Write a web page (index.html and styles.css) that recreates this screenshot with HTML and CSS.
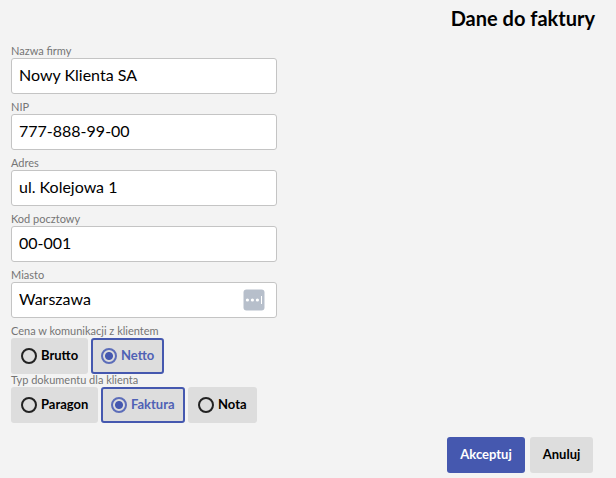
FILE: index.html
```html
<!DOCTYPE html>
<html lang="pl">
<head>
  <meta charset="UTF-8" />
  <meta name="viewport" content="width=device-width, initial-scale=1.0"/>
  <title>Dane do faktury</title>
  <link rel="stylesheet" href="styles.css">
</head>
<body>

  <form class="invoice">
    <h1>Dane do faktury</h1>

    <div class="field">
      <label for="company">Nazwa firmy</label>
      <input type="text" id="company" value="Nowy Klienta SA">
    </div>
    <div class="field">
      <label for="nip">NIP</label>
      <input type="text" id="nip" value="777-888-99-00">
    </div>
    <div class="field">
      <label for="address">Adres</label>
      <input type="text" id="address" value="ul. Kolejowa 1">
    </div>
    <div class="field">
      <label for="postcode">Kod pocztowy</label>
      <input type="text" id="postcode" value="00-001">
    </div>
    <div class="field">
      <label for="city">Miasto</label>
      <input type="text" id="city" value="Warszawa">
      <svg class="autofill" width="22" height="22" viewBox="0 0 22 22">
        <rect x="0.5" y="0.5" width="21" height="21" rx="3" fill="#b7bfcb"/>
        <circle cx="4.4" cy="11" r="1.6" fill="#fff"/>
        <circle cx="9.4" cy="11" r="1.6" fill="#fff"/>
        <circle cx="14.4" cy="11" r="1.6" fill="#fff"/>
        <rect x="18" y="7" width="1" height="8" fill="#fff"/>
      </svg>
    </div>

    <div class="group">
      <span class="group-label">Cena w komunikacji z klientem</span>
      <div class="options">
        <label class="option w-brutto"><input type="radio" name="price"><i class="dot"></i><span>Brutto</span></label>
        <label class="option w-netto"><input type="radio" name="price" checked><i class="dot"></i><span>Netto</span></label>
      </div>
    </div>
    <div class="group">
      <span class="group-label">Typ dokumentu dla klienta</span>
      <div class="options">
        <label class="option w-paragon"><input type="radio" name="doc"><i class="dot"></i><span>Paragon</span></label>
        <label class="option w-faktura"><input type="radio" name="doc" checked><i class="dot"></i><span>Faktura</span></label>
        <label class="option w-nota"><input type="radio" name="doc"><i class="dot"></i><span>Nota</span></label>
      </div>
    </div>

    <div class="actions">
      <button type="button" class="btn btn-primary">Akceptuj</button>
      <button type="button" class="btn btn-cancel">Anuluj</button>
    </div>
  </form>

</body>
</html>
```
FILE: styles.css
```css
* {
  box-sizing: border-box;
}

body {
  margin: 0;
  font-family: Lato, sans-serif;
  background: #f3f3f3;
  color: #000;
  overflow: hidden;
}

.invoice {
  padding: 6px 23px 0 11px;
}

h1 {
  margin: 0 -2px 14px 0;
  font-size: 20px;
  line-height: 24px;
  font-weight: bold;
  text-align: right;
}

.field {
  position: relative;
  width: 266px;
  height: 56px;
}

.field label,
.group-label {
  display: block;
  height: 14px;
  font-size: 11px;
  line-height: 14px;
  color: #757575;
}

.field input {
  display: block;
  width: 100%;
  height: 36px;
  padding: 0 7px 3px;
  border: 1px solid #c4c4c4;
  border-radius: 3px;
  background: #fff;
  color: #000;
  font-family: inherit;
  font-size: 16px;
}

.autofill {
  position: absolute;
  top: 21px;
  right: 12px;
}

.group {
  height: 49px;
}

.options {
  display: flex;
  gap: 3px;
}

.option {
  display: flex;
  align-items: center;
  height: 36px;
  padding: 0 8px;
  border: 2px solid #ddd;
  border-radius: 3px;
  background: #ddd;
  font-size: 13px;
  font-weight: bold;
}

.option span {
  padding-bottom: 2px;
}

.w-brutto { width: 77px; }
.w-netto { width: 73px; }
.w-paragon { width: 87px; }
.w-faktura { width: 84px; }
.w-nota { width: 69px; }

.option input {
  position: absolute;
  opacity: 0;
}

.option:has(input:checked) {
  border-color: #4558af;
  color: #4f61b5;
}

.dot {
  flex: none;
  width: 16px;
  height: 16px;
  margin-right: 4px;
  border: 2px solid #222;
  border-radius: 50%;
}

.option input:checked + .dot {
  border-color: #5c6db9;
  background: radial-gradient(circle, #4558af 3.5px, transparent 4.5px);
}

.actions {
  display: flex;
  justify-content: flex-end;
  gap: 5px;
  margin-top: 15px;
}

.btn {
  height: 36px;
  padding: 0 0 2px;
  border: 0;
  border-radius: 3px;
  font-family: inherit;
  font-size: 13px;
  font-weight: bold;
}

.btn-primary {
  width: 78px;
  background: #4558af;
  color: #fff;
}

.btn-cancel {
  width: 63px;
  background: #ddd;
  color: #000;
}
```
